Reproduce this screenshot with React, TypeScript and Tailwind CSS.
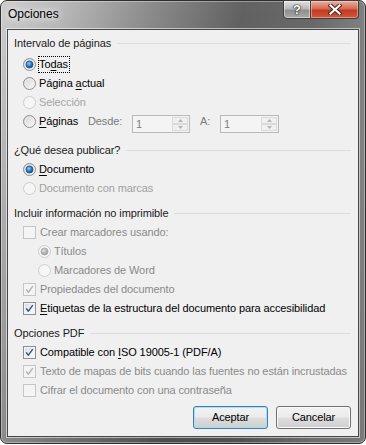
import { ReactNode } from "react";

const FONT = { fontFamily: '"Liberation Sans", Arial, sans-serif' };

const Radio = ({ checked, disabled }: { checked?: boolean; disabled?: boolean }) => {
  const id = disabled ? (checked ? "rdc" : "rd") : checked ? "rec" : "re";
  return (
    <svg width="13" height="13" viewBox="0 0 13 13" className="shrink-0">
      <defs>
        <linearGradient id={`${id}-f`} x1="0" y1="0" x2="1" y2="1">
          <stop offset="0" stopColor={disabled ? "#f4f4f4" : "#d4d4d4"} />
          <stop offset="1" stopColor={disabled ? "#f8f8f8" : "#fbfbfb"} />
        </linearGradient>
        <radialGradient id={`${id}-d`} cx="0.4" cy="0.35" r="0.7">
          <stop offset="0" stopColor={disabled ? "#e2e2e2" : "#8fd0ff"} />
          <stop offset="0.55" stopColor={disabled ? "#b4b4b4" : "#2a7cc7"} />
          <stop offset="1" stopColor={disabled ? "#9a9a9a" : "#0c3f78"} />
        </radialGradient>
      </defs>
      <circle cx="6.5" cy="6.5" r="6" fill={`url(#${id}-f)`} stroke={disabled ? "#cdcdcd" : "#8f8f8f"} />
      {!checked && !disabled && <circle cx="6.5" cy="6.5" r="4.3" fill="none" stroke="#ececec" strokeWidth="0.8" />}
      {checked && <circle cx="6.5" cy="6.5" r="3.5" fill={`url(#${id}-d)`} stroke={disabled ? "#a3a3a3" : "#1b4f8a"} strokeWidth="0.8" />}
    </svg>
  );
};

const Check = ({ checked, disabled }: { checked?: boolean; disabled?: boolean }) => (
  <div
    className={`w-[13px] h-[13px] shrink-0 border relative ${
      disabled
        ? "border-[#c6c6c6] bg-[#f4f4f4]"
        : "border-[#8e8f8f] bg-[linear-gradient(135deg,#dcdcdc_0%,#f2f2f2_60%,#fbfbfb_100%)] shadow-[inset_0_0_0_1px_#f4f4f4]"
    }`}
  >
    {checked && (
      <svg width="11" height="11" viewBox="0 0 11 11" className="absolute left-0 top-0">
        <path
          d="M2.2 5.4 L4.4 8.2 L8.8 2.2"
          fill="none"
          stroke={disabled ? "#b0b0b0" : "#34528c"}
          strokeWidth="1.4"
          strokeLinejoin="round"
        />
      </svg>
    )}
  </div>
);

const Header = ({ title, className = "" }: { title: string; className?: string }) => (
  <div className={`h-[20px] flex items-center pl-[6px] pr-[7px] ${className}`}>
    <span className="text-[#1b1b1b] leading-[13px]">{title}</span>
    <div className="flex-1 h-px bg-[#d7dfe5] ml-[6px]" />
  </div>
);

const Key = ({ children }: { children: ReactNode }) => (
  <span className="underline underline-offset-[1.5px] decoration-1">{children}</span>
);

const RadioRow = ({
  label,
  checked,
  disabled,
  indent,
  tone = "text-[#8a8a8a]",
}: {
  label: ReactNode;
  checked?: boolean;
  disabled?: boolean;
  indent?: boolean;
  tone?: string;
}) => (
  <div className={`h-[19px] flex items-center ${indent ? "pl-[30px]" : "pl-[15px]"}`}>
    <Radio checked={checked} disabled={disabled} />
    <span className={`ml-[3px] leading-[13px] ${disabled ? tone : "text-black"}`}>{label}</span>
  </div>
);

const CheckRow = ({ label, checked, disabled }: { label: ReactNode; checked?: boolean; disabled?: boolean }) => (
  <div className="h-[19px] flex items-center pl-[15px]">
    <Check checked={checked} disabled={disabled} />
    <span className={`ml-[4px] leading-[13px] ${disabled ? "text-[#8a8a8a]" : "text-black"}`}>{label}</span>
  </div>
);

const Spin = ({ w }: { w: string }) => (
  <div className={`${w} h-[18px] mt-[3px] border border-[#b9b9b9] bg-[#f4f4f4] flex items-stretch`}>
    <span className="flex-1 pl-[3px] text-[#7d7d7d] leading-[16px]">1</span>
    <div className="w-[16px] my-[1px] mr-[1px] flex flex-col">
      {["up", "down"].map((d) => (
        <div key={d} className="flex-1 border border-[#dadada] bg-[#f0f0f0] flex items-center justify-center">
          <svg width="5" height="3" viewBox="0 0 5 3">
            <path d={d === "up" ? "M0 3 L2.5 0 L5 3Z" : "M0 0 L2.5 3 L5 0Z"} fill="#b3b3b3" />
          </svg>
        </div>
      ))}
    </div>
  </div>
);

const WinButton = ({ label, def }: { label: string; def?: boolean }) => (
  <button
    className={`w-[75px] h-[23px] rounded-[3px] border text-black text-[11px] tracking-[-0.1px] leading-[13px] bg-[linear-gradient(to_bottom,#f2f2f2_0%,#ebebeb_48%,#dddddd_52%,#cfcfcf_100%)] ${
      def
        ? "border-[#3c7fb1] shadow-[inset_0_0_0_1px_#a8def8]"
        : "border-[#707070] shadow-[inset_0_0_0_1px_#fafafa]"
    }`}
    style={FONT}
  >
    {label}
  </button>
);

export default function App() {
  return (
    <div className="w-[366px] h-[445px] bg-white" style={FONT}>
      <div className="w-[366px] h-[444px] rounded-[7px] border border-[#2e2e2e] flex flex-col shadow-[inset_0_0_0_1px_rgba(255,255,255,0.35)] bg-[linear-gradient(to_bottom,rgba(0,0,0,0)_0%,rgba(0,0,0,0.22)_100%),linear-gradient(100deg,#cdcdcd_0%,#b9b9b9_14%,#8a8a8a_35%,#626262_55%,#6a6a6a_72%,#8c8c8c_88%,#9a9a9a_100%)]">
        <div className="h-[28px] flex items-start shrink-0">
          <span className="pl-[7px] pt-[6px] text-[12px] leading-[15px] text-black [text-shadow:0_0_6px_rgba(255,255,255,0.95),0_0_10px_rgba(255,255,255,0.8)]">
            Opciones
          </span>
          <div className="ml-auto mr-[6px] flex h-[19px] -mt-px">
            <div className="w-[28px] h-full border border-[#3e3e3e] rounded-bl-[4px] bg-[linear-gradient(to_bottom,#e2e2e2_0%,#b9b9b9_45%,#8f8f8f_55%,#a9a9a9_100%)] shadow-[inset_0_0_0_1px_rgba(255,255,255,0.45)] flex items-center justify-center">
              <span className="text-white font-bold text-[13px] leading-[13px] [text-shadow:0_0_1px_#222,0_0_1px_#222,0_0_2px_#333]">?</span>
            </div>
            <div className="w-[48px] h-full border border-l-0 border-[#3e3e3e] rounded-br-[4px] bg-[linear-gradient(to_bottom,#eab1a3_0%,#d66a50_45%,#c23a20_55%,#d3593d_100%)] shadow-[inset_0_0_0_1px_rgba(255,220,210,0.45)] flex items-center justify-center">
              <svg width="14" height="11" viewBox="0 0 14 11">
                <path d="M2.5 1.5 L11.5 9.5 M11.5 1.5 L2.5 9.5" stroke="#3a2420" strokeWidth="4" strokeLinecap="square" />
                <path d="M2.5 1.5 L11.5 9.5 M11.5 1.5 L2.5 9.5" stroke="#ffffff" strokeWidth="2.2" strokeLinecap="square" />
              </svg>
            </div>
          </div>
        </div>

        <div className="mx-[6px] mb-[6px] flex-1 border border-[#474747] bg-[#f0f0f0] shadow-[0_0_0_1px_rgba(255,255,255,0.55)] flex flex-col pt-[3px] text-[11px] tracking-[-0.1px]">
          <Header title="Intervalo de páginas" />
          <div className="mt-[2px]">
            <div className="h-[19px] flex items-center pl-[15px]">
              <Radio checked />
              <span className="ml-[2px] pr-[1px] leading-[15px] border border-dotted border-black text-black">
                To<Key>d</Key>as
              </span>
            </div>
            <RadioRow label={<>Página <Key>a</Key>ctual</>} />
            <RadioRow label="Selección" disabled tone="text-[#a5a5a5]" />
            <div className="h-[19px] flex items-start pl-[15px]">
              <div className="h-[19px] flex items-center">
                <Radio />
                <span className="ml-[3px] w-[49px] leading-[13px] text-black">
                  <Key>P</Key>áginas
                </span>
                <span className="w-[44px] leading-[13px] text-[#7b7b7b]">Desde:</span>
              </div>
              <Spin w="w-[58px]" />
              <span className="ml-[10px] w-[20px] leading-[19px] text-[#7b7b7b]">A:</span>
              <Spin w="w-[59px]" />
            </div>
          </div>

          <Header title="¿Qué desea publicar?" className="mt-[9px]" />
          <RadioRow label={<><Key>D</Key>ocumento</>} checked />
          <RadioRow label="Documento con marcas" disabled tone="text-[#a0a0a0]" />

          <Header title="Incluir información no imprimible" className="mt-[5px]" />
          <CheckRow label="Crear marcadores usando:" disabled />
          <RadioRow label="Títulos" checked disabled indent />
          <RadioRow label="Marcadores de Word" disabled indent />
          <CheckRow label="Propiedades del documento" checked disabled />
          <CheckRow label={<><Key>E</Key>tiquetas de la estructura del documento para accesibilidad</>} checked />

          <Header title="Opciones PDF" className="mt-[5px]" />
          <CheckRow label={<>Compatible con <Key>I</Key>SO 19005-1 (PDF/A)</>} checked />
          <CheckRow label="Texto de mapas de bits cuando las fuentes no están incrustadas" checked disabled />
          <CheckRow label="Cifrar el documento con una contraseña" disabled />

          <div className="mt-[6px] flex justify-end gap-[8px] pr-[7px]">
            <WinButton label="Aceptar" def />
            <WinButton label="Cancelar" />
          </div>
        </div>
      </div>
    </div>
  );
}
